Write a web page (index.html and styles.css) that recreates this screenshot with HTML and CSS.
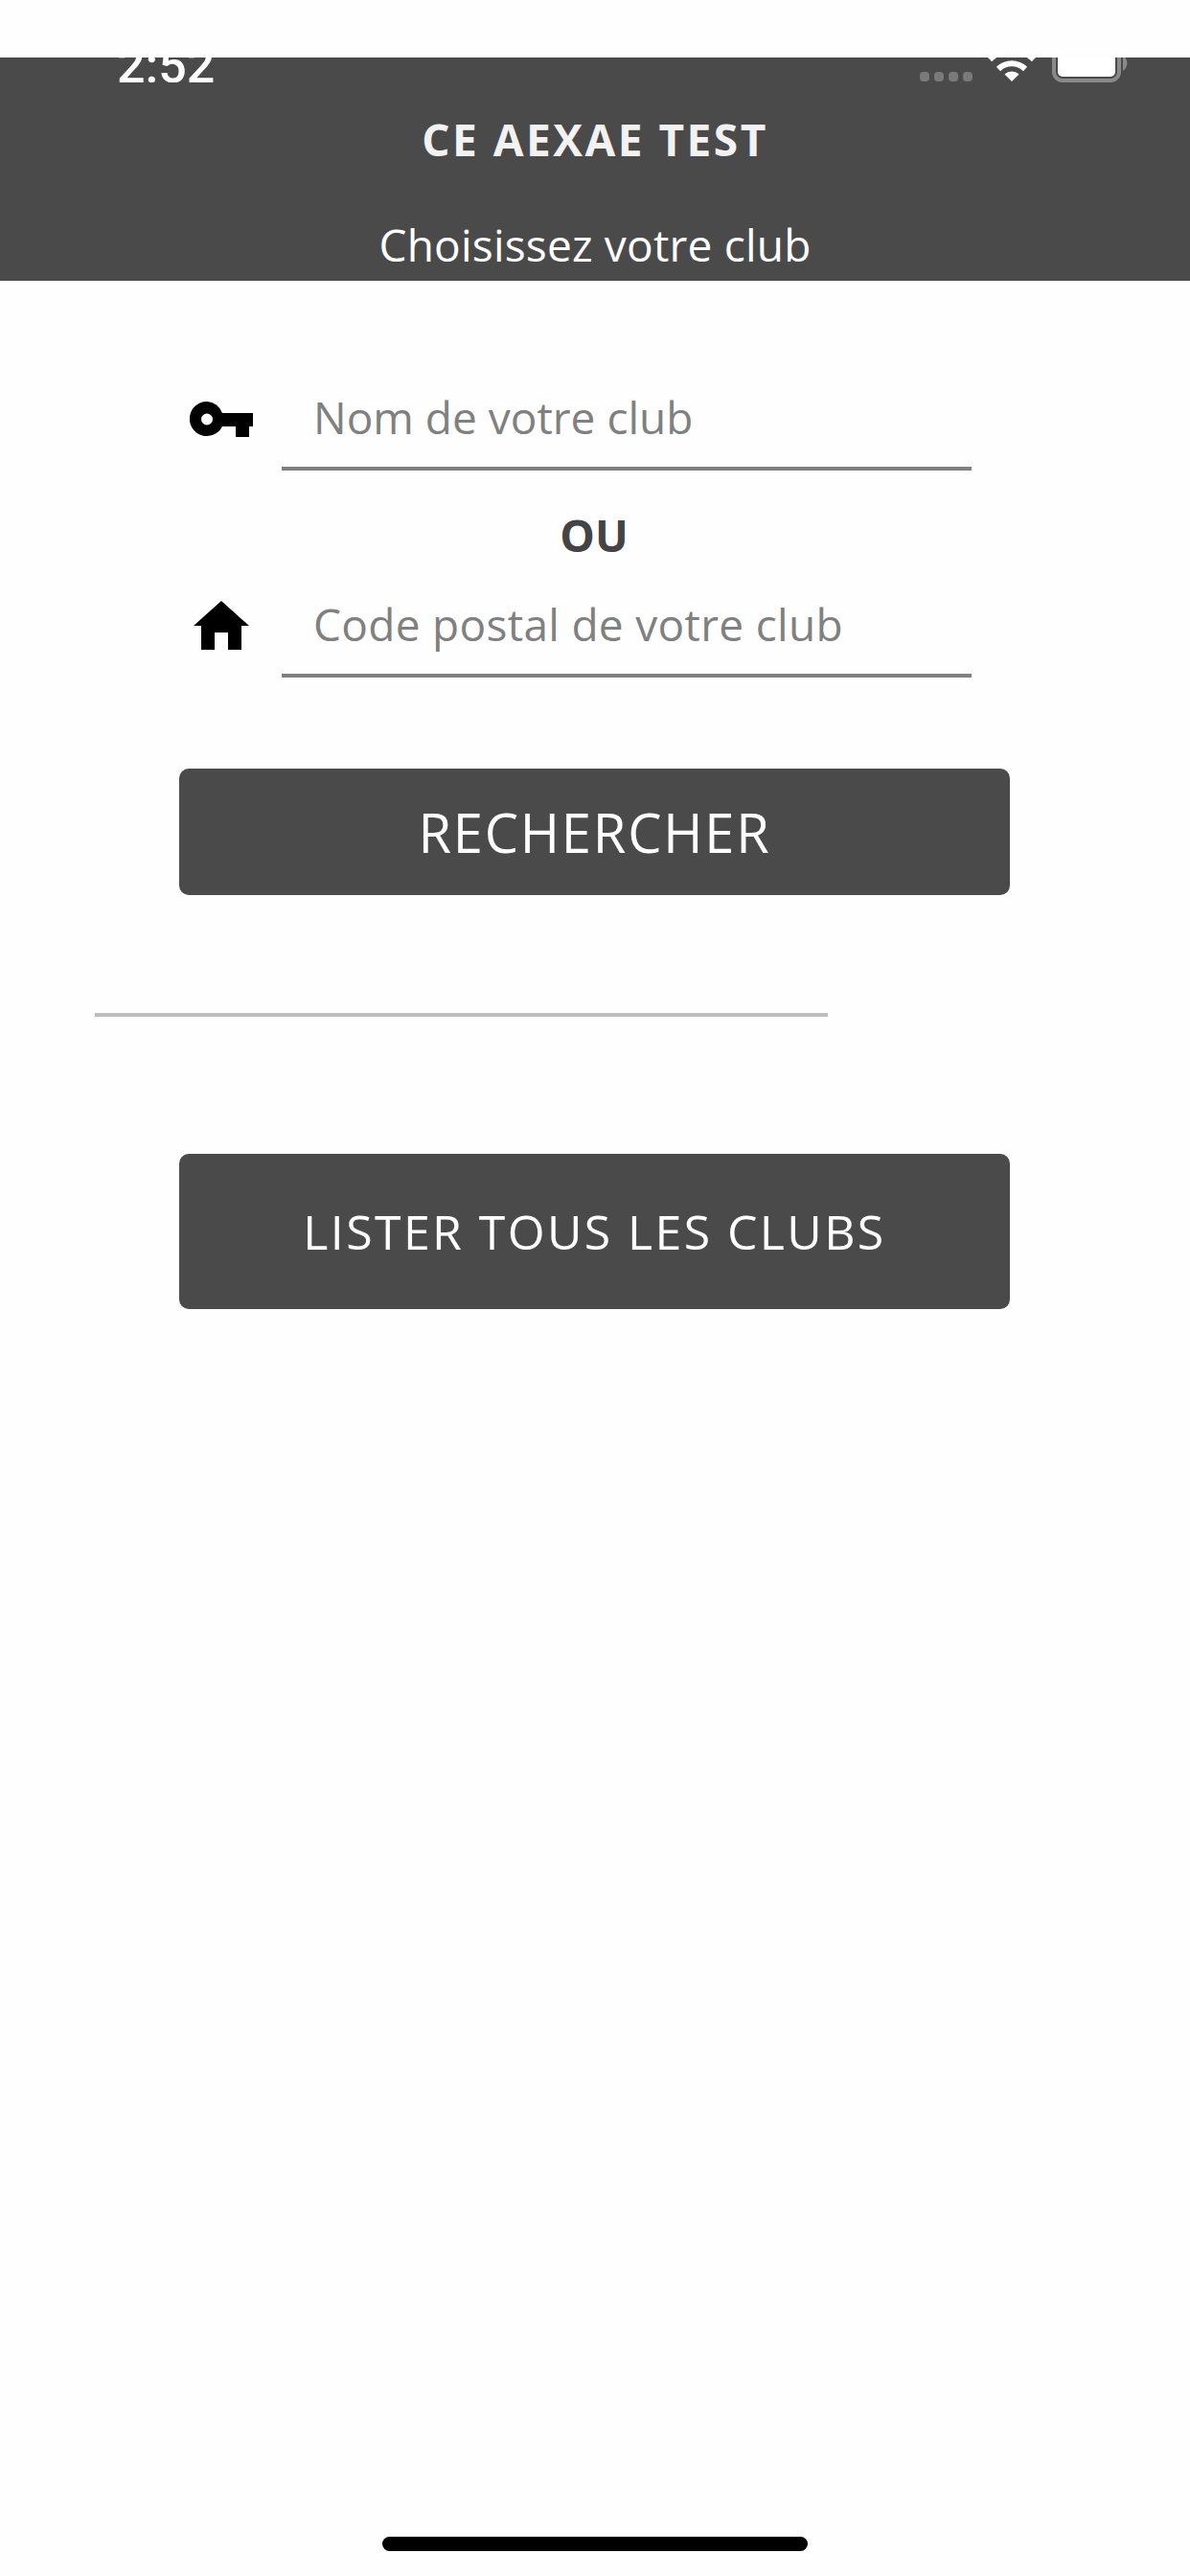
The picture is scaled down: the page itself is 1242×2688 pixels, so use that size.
FILE: index.html
```html
<!DOCTYPE html>
<html lang="fr">
<head>
    <meta charset="UTF-8">
    <meta name="viewport" content="width=device-width, initial-scale=1.0">
    <title>CE AEXAE TEST</title>
    <link rel="stylesheet" href="styles.css">
</head>
<body>
    <div class="page">
        <header class="top-bar">
            <div class="status-bar">
                <span class="status-time">2:52</span>
                <div class="status-icons">
                    <div class="signal-dots"><i></i><i></i><i></i><i></i></div>
                    <svg class="wifi-icon" width="52" height="40" viewBox="0 0 52 40">
                        <path d="M26 40 L18.5 32.5 A11 11 0 0 1 33.5 32.5 Z" fill="#fff"/>
                        <path d="M12 27 A20 20 0 0 1 40 27" fill="none" stroke="#fff" stroke-width="6"/>
                        <path d="M3 17 A33 33 0 0 1 49 17" fill="none" stroke="#fff" stroke-width="6"/>
                    </svg>
                    <svg class="battery-icon" width="80" height="46" viewBox="0 0 80 46">
                        <rect x="3" y="2" width="68" height="42" rx="9" fill="none" stroke="#8a8a8a" stroke-width="4"/>
                        <rect x="7" y="6" width="60" height="34" rx="5" fill="#fff"/>
                        <path d="M75 18 A9.5 9.5 0 0 1 75 34 Z" fill="#8a8a8a"/>
                    </svg>
                </div>
            </div>
            <h1 class="app-title">CE AEXAE TEST</h1>
            <p class="app-subtitle">Choisissez votre club</p>
        </header>

        <main class="content">
            <div class="search-form">
                <div class="field-row">
                    <div class="icon-box key-box">
                        <svg width="66" height="37" viewBox="0 0 66 37">
                            <path fill-rule="evenodd" d="M18 0 A18 18 0 0 1 34 12 H66 V26 H62 V37 H48 V26 H34 A18 18 0 1 1 18 0 Z M18 12.5 A6 6 0 1 0 18 24.5 A6 6 0 1 0 18 12.5 Z"/>
                        </svg>
                    </div>
                    <div class="field-input">Nom de votre club</div>
                </div>
                <div class="or-label">OU</div>
                <div class="field-row">
                    <div class="icon-box home-box">
                        <svg width="58" height="51" viewBox="0 0 58 51">
                            <path d="M29 0 L58 26 H50 V51 H36 V33 H22 V51 H8 V26 H0 Z"/>
                        </svg>
                    </div>
                    <div class="field-input postal-input">Code postal de votre club</div>
                </div>
            </div>

            <button class="main-button search-button">RECHERCHER</button>
            <hr class="separator">
            <button class="main-button list-button">LISTER TOUS LES CLUBS</button>
        </main>

        <div class="home-indicator"></div>
    </div>
</body>
</html>
```

FILE: styles.css
```css
* {
    box-sizing: border-box;
}
html, body {
    margin: 0;
    padding: 0;
    background: #fefefe;
}
body {
    font-family: "Open Sans", "DejaVu Sans", sans-serif;
    color: #444;
}
.page {
    height: 2688px;
    padding-top: 60px;
    display: flex;
    flex-direction: column;
}
.top-bar {
    height: 233px;
    background-color: #4a4a4a;
    color: #fff;
    text-align: center;
}
.status-bar {
    height: 26px;
    padding: 0 65px 0 122px;
    display: flex;
    justify-content: space-between;
    align-items: flex-end;
    overflow: hidden;
}
.status-time {
    font-family: Roboto, sans-serif;
    font-weight: 500;
    font-size: 52px;
    line-height: 34px;
    height: 34px;
    flex-shrink: 0;
}
.status-icons {
    display: flex;
    align-items: flex-end;
}
.signal-dots {
    display: flex;
    gap: 5px;
    margin-right: 15px;
    margin-bottom: 1px;
}
.signal-dots i {
    width: 10px;
    height: 10px;
    border-radius: 4px;
    background: #7a7a7a;
}
.wifi-icon {
    margin-right: 15px;
    margin-bottom: 1px;
    flex-shrink: 0;
}
.battery-icon {
    flex-shrink: 0;
}
.app-title {
    margin: 32px 0 0;
    font-size: 46px;
    line-height: 54px;
    font-weight: 700;
    letter-spacing: 2.5px;
    color: #f2f2f2;
}
.app-subtitle {
    margin: 53px 0 0;
    font-size: 46px;
    line-height: 60px;
    letter-spacing: 0.2px;
}
.content {
    padding-top: 110px;
}
.search-form {
    padding-left: 198px;
}
.field-row {
    display: flex;
    height: 88px;
}
.icon-box {
    width: 66px;
    display: flex;
    justify-content: center;
    flex-shrink: 0;
}
.key-box {
    padding-top: 16px;
}
.home-box {
    padding-top: 8px;
}
.field-input {
    width: 720px;
    margin-left: 30px;
    padding: 2px 0 0 33px;
    border-bottom: 4px solid #808080;
    font-size: 46px;
    line-height: 60px;
    color: #808080;
}
.postal-input {
    letter-spacing: 0.3px;
}
.or-label {
    width: 844px;
    margin: 39px 0 33px;
    text-align: center;
    font-size: 46px;
    line-height: 56px;
    font-weight: 700;
}
.main-button {
    display: block;
    width: 867px;
    margin-left: 187px;
    border: 0;
    border-radius: 10px;
    background-color: #4a4a4a;
    color: #fff;
    font-family: inherit;
}
.search-button {
    height: 132px;
    margin-top: 95px;
    font-size: 56px;
    letter-spacing: 1.8px;
}
.list-button {
    height: 162px;
    font-size: 50px;
    letter-spacing: 2.4px;
}
.separator {
    width: 765px;
    height: 4px;
    margin: 123px 0 143px 99px;
    border: 0;
    background: #bdbdbd;
}
.home-indicator {
    width: 444px;
    height: 15px;
    margin: auto auto 26px;
    border-radius: 8px;
    background: #000;
}
```
